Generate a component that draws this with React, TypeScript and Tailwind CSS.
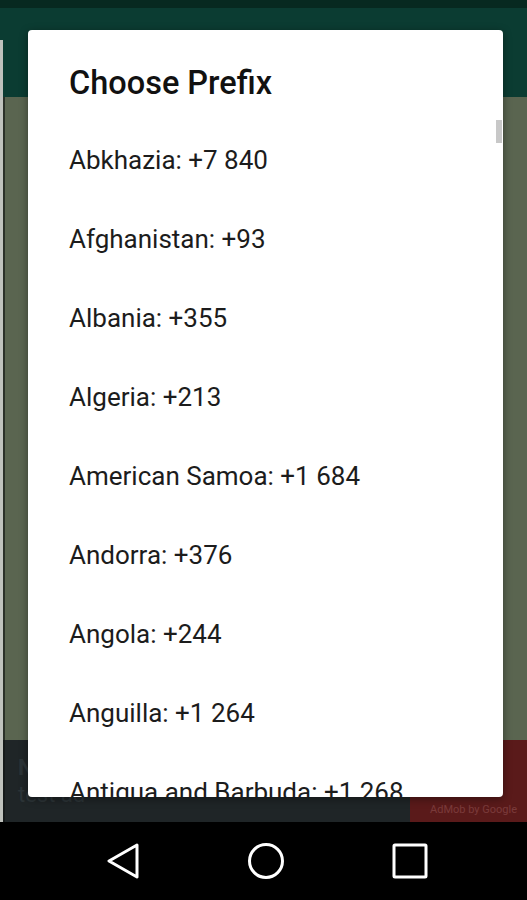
import React from "react";

const items = [
  "Abkhazia: +7 840",
  "Afghanistan: +93",
  "Albania: +355",
  "Algeria: +213",
  "American Samoa: +1 684",
  "Andorra: +376",
  "Angola: +244",
  "Anguilla: +1 264",
  "Antigua and Barbuda: +1 268",
];

export default function App() {
  return (
    <div
      className="relative w-[527px] h-[900px] overflow-hidden bg-black"
      style={{ fontFamily: "Roboto, 'Noto Sans', sans-serif" }}
    >
      <div className="flex flex-col h-full">
        <div className="h-[8px] bg-[#072920]" />
        <div className="h-[89px] flex bg-[#0b3c32]">
          <div className="w-[3px] flex flex-col">
            <div className="h-[32px]" />
            <div className="flex-1 bg-[#bfc2bd]" />
          </div>
          <div className="flex-1" />
        </div>
        <div className="flex-1 flex bg-[#5a6550]">
          <div className="w-[3px] bg-[#bfc2bd]" />
          <div className="w-[2px] bg-[#2a3028]" />
          <div className="flex-1" />
        </div>
        <div className="h-[82px] flex bg-[#1f2527]">
          <div className="w-[3px] bg-[#bfc2bd]" />
          <div className="w-[2px] bg-[#151a1a]" />
          <div className="flex-1 flex flex-col pl-[13px] pt-[14px] text-[#2c3437]">
            <span className="text-[22px] leading-[28px] font-bold">N</span>
            <span className="text-[22px] leading-[26px]">test ad</span>
          </div>
          <div className="w-[117px] bg-[#5a1a1a] flex items-end justify-end pr-[10px] pb-[4px]">
            <span className="text-[11px] text-[#7a3a3a]">AdMob by Google</span>
          </div>
        </div>
        <div className="h-[78px] bg-black flex items-center justify-between pl-[106px] pr-[99px]">
          <svg width="34" height="36" viewBox="0 0 34 36" fill="none">
            <path d="M31 2 L3 18 L31 34 Z" stroke="white" strokeWidth="3" strokeLinejoin="round" />
          </svg>
          <svg width="38" height="38" viewBox="0 0 38 38" fill="none">
            <circle cx="19" cy="19" r="16.5" stroke="white" strokeWidth="3" />
          </svg>
          <svg width="36" height="36" viewBox="0 0 36 36" fill="none">
            <rect x="2" y="2" width="32" height="32" rx="1" stroke="white" strokeWidth="3" />
          </svg>
        </div>
      </div>

      <div className="absolute left-[28px] top-[30px] w-[475px] h-[767px] bg-white rounded-[4px] overflow-hidden shadow-[0_2px_8px_rgba(0,0,0,0.4)]">
        <div className="pl-[41px] pt-[37px] h-[91px]">
          <div className="text-[32.5px] leading-[32px] font-medium text-[#111]">Choose Prefix</div>
        </div>
        <div className="relative">
          <div className="absolute right-[1px] top-[-1px] w-[6px] h-[23px] bg-[#c8c8c8]" />
          {items.map((t) => (
            <div key={t} className="h-[79px] flex items-center pl-[41px] text-[26px] text-[#1c1c1c]">
              {t}
            </div>
          ))}
        </div>
      </div>
    </div>
  );
}
